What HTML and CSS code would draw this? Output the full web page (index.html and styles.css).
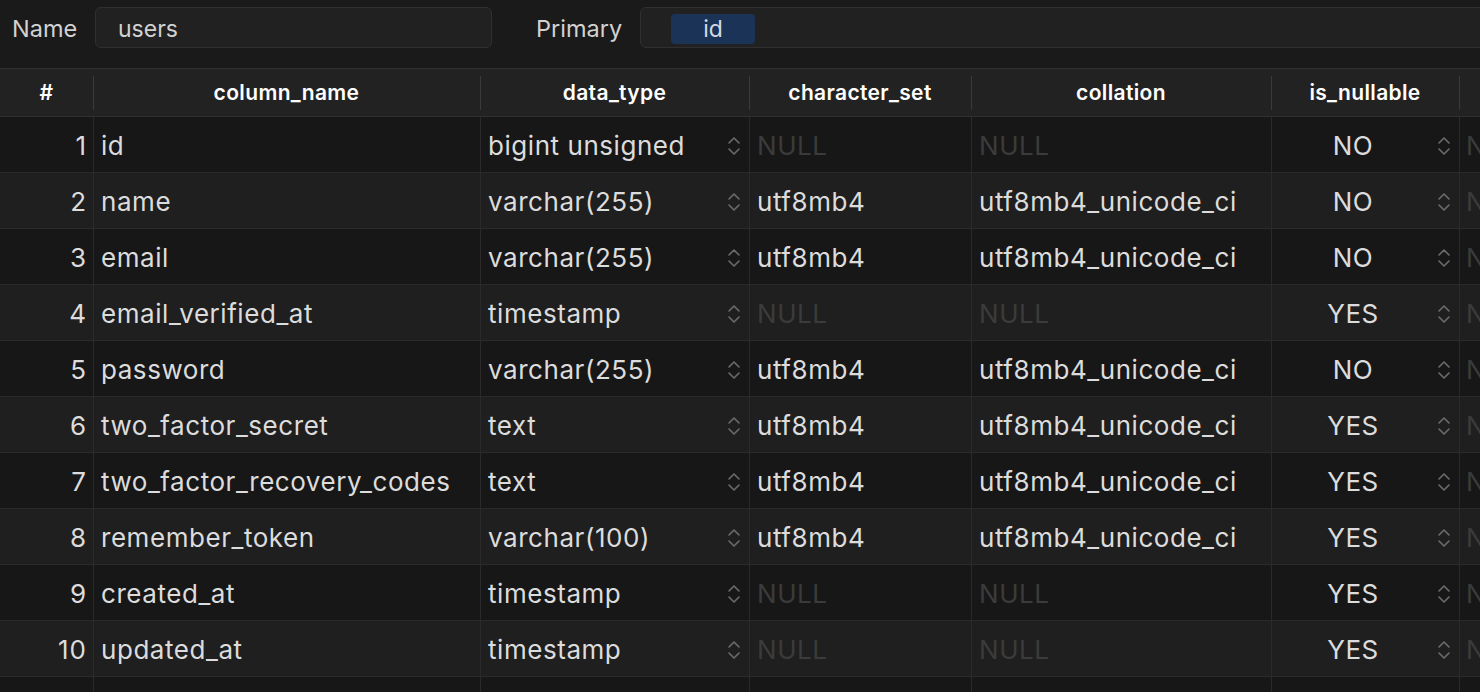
FILE: index.html
```html
<!DOCTYPE html>
<html>
<head>
<meta charset="utf-8">
<link rel="stylesheet" href="styles.css">
</head>
<body>
<div class="topbar">
  <div class="label">Name</div>
  <div class="box"><span class="box-text">users</span></div>
  <div class="label label-primary">Primary</div>
  <div class="box box-wide"><span class="chip">id</span></div>
</div>
<div class="table">
  <div class="row head">
    <div class="cell">#</div>
    <div class="cell">column_name</div>
    <div class="cell">data_type</div>
    <div class="cell">character_set</div>
    <div class="cell">collation</div>
    <div class="cell">is_nullable</div>
    <div class="cell"></div>
  </div>
  <div id="rows"></div>
</div>
<template id="stepper"><svg class="stepper" viewBox="0 0 14 22" width="14" height="22"><polyline points="2,8 7,3 12,8"/><polyline points="2,14 7,19 12,14"/></svg></template>
<script src="app.js"></script>
</body>
</html>
```
FILE: app.js
```js
const data = [
  ["1","id","bigint unsigned",null,null,"NO"],
  ["2","name","varchar(255)","utf8mb4","utf8mb4_unicode_ci","NO"],
  ["3","email","varchar(255)","utf8mb4","utf8mb4_unicode_ci","NO"],
  ["4","email_verified_at","timestamp",null,null,"YES"],
  ["5","password","varchar(255)","utf8mb4","utf8mb4_unicode_ci","NO"],
  ["6","two_factor_secret","text","utf8mb4","utf8mb4_unicode_ci","YES"],
  ["7","two_factor_recovery_codes","text","utf8mb4","utf8mb4_unicode_ci","YES"],
  ["8","remember_token","varchar(100)","utf8mb4","utf8mb4_unicode_ci","YES"],
  ["9","created_at","timestamp",null,null,"YES"],
  ["10","updated_at","timestamp",null,null,"YES"],
  ["","","",null,null,""]
];
const tpl = document.getElementById('stepper').innerHTML;
const rows = document.getElementById('rows');
data.forEach((r, i) => {
  const row = document.createElement('div');
  row.className = 'row body ' + (i % 2 === 0 ? 'odd' : 'even');
  const last = r[0] === '';
  const null_ = v => v === null ? (last ? '' : '<span class="null">NULL</span>') : v;
  row.innerHTML =
    `<div class="cell num">${r[0]}</div>` +
    `<div class="cell">${r[1]}</div>` +
    `<div class="cell sel"><span class="sel-text">${r[2]}</span>${last ? '' : tpl}</div>` +
    `<div class="cell">${null_(r[3])}</div>` +
    `<div class="cell">${null_(r[4])}</div>` +
    `<div class="cell sel center"><span class="sel-text">${r[5]}</span>${last ? '' : tpl}</div>` +
    `<div class="cell clip">${last ? '' : '<span class="null">NULL</span>'}</div>`;
  rows.appendChild(row);
});
```
FILE: styles.css
```css
html, body {
  margin: 0;
  padding: 0;
  background: #1a1a1a;
  overflow: hidden;
  width: 1480px;
  height: 692px;
  font-family: Inter, "Noto Sans", "Liberation Sans", sans-serif;
}

.topbar {
  display: grid;
  grid-template-columns: 95px 397px 148px 1fr;
  height: 68px;
  box-sizing: border-box;
  padding-top: 7px;
  margin-right: -20px;
}

.label {
  padding-left: 12px;
  height: 41px;
  line-height: 41px;
  font-size: 23.5px;
  color: #d2d2d2;
  margin-top: 1px;
}

.label-primary {
  padding-left: 44px;
}

.box {
  height: 41px;
  box-sizing: border-box;
  border: 1px solid #303030;
  border-radius: 6px;
  background: #212121;
  display: flex;
  align-items: center;
}

.box-text {
  padding-left: 22px;
  font-size: 23px;
  color: #d2d2d2;
  margin-top: 2px;
}

.chip {
  margin-left: 30px;
  width: 84px;
  height: 30px;
  border-radius: 4px;
  background: #1b3356;
  color: #d3dae6;
  font-size: 23px;
  display: flex;
  align-items: center;
  justify-content: center;
  margin-top: 2px;
}

.table {
  border-top: 1px solid #303030;
}

.row {
  display: grid;
  grid-template-columns: 93px 387px 269px 222px 300px 188px 1fr;
}

.head {
  height: 47px;
  background: #222222;
  border-bottom: 1px solid #303030;
}

.head .cell {
  position: relative;
  display: flex;
  align-items: center;
  justify-content: center;
  color: #ffffff;
  font-weight: 600;
  font-size: 21px;
  letter-spacing: 0.35px;
  padding-bottom: 1px;
}

.head .cell + .cell::before {
  content: "";
  position: absolute;
  left: 0;
  top: 7px;
  height: 34px;
  width: 1px;
  background: #3a3a3a;
}

.body {
  height: 55px;
  border-bottom: 1px solid #2a2a2a;
}

.odd { background: #171717; }
.even { background: #1f1f1f; }

.body .cell {
  display: flex;
  align-items: center;
  padding-left: 7px;
  font-size: 26px;
  letter-spacing: 0.55px;
  color: #dcdcdc;
  white-space: nowrap;
  overflow: hidden;
  min-width: 0;
  padding-top: 2px;
}

.body .cell + .cell {
  border-left: 1px solid #2a2a2a;
}

.body .cell.num {
  justify-content: flex-end;
  padding-left: 0;
  padding-right: 6px;
  letter-spacing: 1px;
}

.body .cell.clip {
  padding-left: 6px;
}

.sel {
  padding-right: 8px;
}

.sel-text {
  flex: 1;
}

.center .sel-text {
  text-align: center;
  padding-right: 10px;
}

.null {
  color: #3b3b3b;
}

.stepper {
  flex: none;
  fill: none;
  stroke: #6c6c6c;
  stroke-width: 1.6;
  stroke-linecap: round;
  stroke-linejoin: round;
  margin-top: 1px;
}
```
